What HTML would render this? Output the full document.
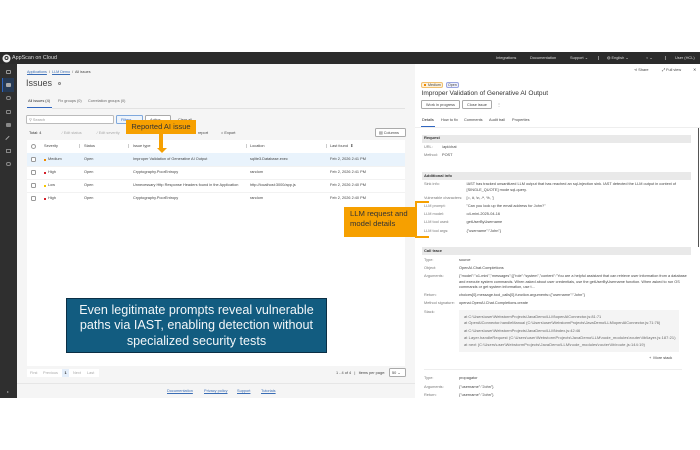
<!DOCTYPE html>
<html><head><meta charset="utf-8"><style>
html,body{margin:0;padding:0;background:#fff}
#p{position:relative;width:700px;height:450px;overflow:hidden;background:#fff;font-family:"Liberation Sans",sans-serif;color:#333;filter:blur(.3px)}
#p div{position:absolute;box-sizing:border-box}
.t{white-space:nowrap;font-size:3.85px;line-height:6px;color:#444}
.g{color:#777}.l{color:#3a6db5;text-decoration:underline}
.h{font-size:4px;font-weight:bold;color:#333}
.btn{background:#fff;border:1px solid #aaa;border-radius:1.5px}
.sec{background:#e9e9e9;height:8px;left:422px;width:269px}
.cb{width:5px;height:5px;border:.7px solid #999;border-radius:1.2px;background:#fff}
.dot{width:2px;height:2px}
.org{background:#f6a000}
.sep{width:.6px;height:4px;background:#ccc;top:144px}
.st{color:#666;font-size:3.9px}
</style></head><body><div id="p">
<div style="left:0;top:52px;width:700px;height:12px;background:#2b2b2b"></div>
<div style="left:0;top:64px;width:17px;height:334px;background:#2f2f2f"></div>
<div style="left:17px;top:64px;width:398px;height:334px;background:#f5f5f5"></div>
<div style="left:415px;top:64px;width:285px;height:336px;background:#fff"></div>

<svg style="position:absolute;left:2px;top:54px" width="9" height="9" viewBox="0 0 9 9"><circle cx="4.5" cy="4.5" r="4" fill="#eee"/><circle cx="4.5" cy="4" r="2" fill="#2b2b2b"/><circle cx="4.5" cy="4" r="1" fill="#eee"/></svg>
<div class="t" style="left:12px;top:55px;color:#ddd;font-size:5.4px">AppScan on Cloud</div>
<div class="t" style="left:496px;top:55px;color:#ddd;font-size:3.9px">Integrations</div>
<div class="t" style="left:530px;top:55px;color:#ddd;font-size:3.9px">Documentation</div>
<div class="t" style="left:570px;top:55px;color:#ddd;font-size:3.9px">Support ⌄</div>
<div style="left:598px;top:56px;width:.6px;height:4px;background:#888"></div>
<div class="t" style="left:607px;top:55px;color:#ddd;font-size:3.9px">◍ English ⌄</div>
<div class="t" style="left:646px;top:55px;color:#ddd;font-size:3.9px">○ ⌄</div>
<div style="left:665px;top:56px;width:.6px;height:4px;background:#888"></div>
<div class="t" style="left:675px;top:55px;color:#ddd;font-size:3.9px">User (HCL)</div>

<div style="left:2px;top:78px;width:12px;height:14px;background:#263a55"></div>
<div style="left:2px;top:78px;width:1px;height:14px;background:#2f66c0"></div>
<div style="left:6px;top:70px;width:5px;height:4px;border:.8px solid #999;border-radius:1px"></div>
<div style="left:6px;top:83px;width:5px;height:4px;background:#aaa;border-radius:1px"></div>
<div style="left:6px;top:96px;width:5px;height:4px;border:.8px solid #888;border-radius:2px"></div>
<div style="left:6px;top:110px;width:5px;height:4px;border:.8px solid #888;border-radius:1px"></div>
<div style="left:6px;top:123px;width:5px;height:4px;background:#888;border-radius:1px"></div>
<div style="left:6px;top:137px;width:5px;height:4px;border-top:1px solid #aaa;transform:rotate(-45deg)"></div>
<div style="left:6px;top:149px;width:5px;height:4px;border:.8px solid #888"></div>
<div style="left:6px;top:162px;width:5px;height:4px;border:.8px solid #888;border-radius:2px"></div>
<div class="t" style="left:7px;top:389px;color:#999;font-size:4px">▸</div>

<div class="t" style="left:27px;top:69px;font-size:3.7px"><span class="l">Applications</span> &nbsp;/&nbsp; <span class="l">LLM Demo</span> &nbsp;/&nbsp; All issues</div>
<div class="t" style="left:26px;top:76px;font-size:9px;line-height:14px;color:#444">Issues</div>
<div style="left:57.5px;top:81.5px;width:3.5px;height:3.5px;border:.7px solid #888;border-radius:50%"></div>

<div class="t" style="left:28px;top:98px;color:#333">All issues (4)</div>
<div class="t" style="left:58px;top:98px;color:#666">Fix groups (0)</div>
<div class="t" style="left:88px;top:98px;color:#666">Correlation groups (0)</div>
<div style="left:27px;top:107px;width:25px;height:1px;background:#2f66c0"></div>
<div style="left:52px;top:107.5px;width:353px;height:.6px;background:#e2e2e2"></div>

<div class="btn" style="left:26px;top:115px;width:88px;height:9px;border-color:#bbb"></div>
<div class="t g" style="left:29px;top:116.5px;color:#999">⚲ Search</div>
<div class="btn" style="left:116px;top:115px;width:27px;height:9px;border-color:#7fa8dc;background:#eef4fb"></div>
<div class="t" style="left:121px;top:116.5px;color:#2f66c0">Filters</div>
<div class="btn" style="left:145px;top:115px;width:26px;height:9px"></div>
<div class="t" style="left:150px;top:116.5px">Active</div>
<div class="t" style="left:178px;top:116.5px">Clear all</div>

<div class="t" style="left:29px;top:129.5px;color:#333">Total: 4</div>
<div class="t" style="left:62px;top:129.5px;color:#aaa">⁄ Edit status</div>
<div class="t" style="left:97px;top:129.5px;color:#aaa">⁄ Edit severity</div>
<div class="t" style="left:198px;top:129.5px">report</div>
<div class="t" style="left:221px;top:129.5px">⌂ Export</div>
<div class="btn" style="left:375px;top:128px;width:31px;height:9px"></div>
<div class="t" style="left:379px;top:129.5px">▤ Columns</div>

<div style="left:27px;top:140px;width:378px;height:226px;background:#fff"></div>
<div style="left:27px;top:153px;width:378px;height:13px;background:#e9f3fc"></div>
<div style="left:27px;top:178.8px;width:378px;height:.5px;background:#f2f2f2"></div>
<div style="left:27px;top:165.8px;width:378px;height:.5px;background:#f2f2f2"></div>
<div style="left:27px;top:191.8px;width:378px;height:.5px;background:#f2f2f2"></div>

<div class="sep" style="left:79px"></div><div class="sep" style="left:128px"></div><div class="sep" style="left:246px"></div><div class="sep" style="left:326px"></div>
<div class="cb" style="left:31px;top:144px;border-radius:3px"></div>
<div class="t" style="left:44px;top:143px">Severity</div>
<div class="t" style="left:84px;top:143px">Status</div>
<div class="t" style="left:133px;top:143px">Issue type</div>
<div class="t" style="left:250px;top:143px">Location</div>
<div class="t" style="left:330px;top:143px">Last found &nbsp;⬍</div>

<div class="cb" style="left:31px;top:157px"></div>
<div class="dot" style="left:44px;top:158.5px;background:#f08a00"></div>
<div class="t" style="left:48px;top:156px">Medium</div><div class="t" style="left:84px;top:156px">Open</div>
<div class="t" style="left:133px;top:156px">Improper Validation of Generative AI Output</div>
<div class="t" style="left:250px;top:156px">sqlite3.Database.exec</div><div class="t" style="left:330px;top:156px">Feb 2, 2026 2:41 PM</div>

<div class="cb" style="left:31px;top:170px"></div>
<div class="dot" style="left:44px;top:171.5px;background:#d5202a"></div>
<div class="t" style="left:48px;top:169px">High</div><div class="t" style="left:84px;top:169px">Open</div>
<div class="t" style="left:133px;top:169px">Cryptography.PoorEntropy</div>
<div class="t" style="left:250px;top:169px">random</div><div class="t" style="left:330px;top:169px">Feb 2, 2026 2:41 PM</div>

<div class="cb" style="left:31px;top:183px"></div>
<div class="dot" style="left:44px;top:184.5px;background:#f5c400"></div>
<div class="t" style="left:48px;top:182px">Low</div><div class="t" style="left:84px;top:182px">Open</div>
<div class="t" style="left:133px;top:182px">Unnecessary Http Response Headers found in the Application</div>
<div class="t" style="left:250px;top:182px">http://localhost:3000/app.js</div><div class="t" style="left:330px;top:182px">Feb 2, 2026 2:40 PM</div>

<div class="cb" style="left:31px;top:196px"></div>
<div class="dot" style="left:44px;top:197.5px;background:#d5202a"></div>
<div class="t" style="left:48px;top:195px">High</div><div class="t" style="left:84px;top:195px">Open</div>
<div class="t" style="left:133px;top:195px">Cryptography.PoorEntropy</div>
<div class="t" style="left:250px;top:195px">random</div><div class="t" style="left:330px;top:195px">Feb 2, 2026 2:40 PM</div>

<div style="left:66px;top:298px;width:261px;height:55px;background:#125c80;border:.8px solid #0b2f45"></div>
<div style="left:66px;top:298px;width:261px;height:55px;color:#f2f6f8;font-size:12.6px;line-height:15.8px;text-align:center;padding-top:4.6px">Even legitimate prompts reveal vulnerable<br>paths via IAST, enabling detection without<br>specialized security tests</div>

<div style="left:27px;top:369px;width:72px;height:8px;background:#fff"></div>
<div class="t g" style="left:30px;top:370px;color:#aaa">First</div>
<div class="t g" style="left:43px;top:370px;color:#aaa">Previous</div>
<div style="left:62px;top:369px;width:7px;height:8px;background:#e4eefa"></div>
<div class="t" style="left:64.5px;top:370px;color:#333;font-weight:bold">1</div>
<div class="t g" style="left:73px;top:370px;color:#aaa">Next</div>
<div class="t g" style="left:87px;top:370px;color:#aaa">Last</div>
<div class="t" style="left:336px;top:370px">1 - 4 of 4 &nbsp; | &nbsp; Items per page:</div>
<div class="btn" style="left:389px;top:368px;width:17px;height:9px"></div>
<div class="t" style="left:392px;top:370px">50 ⌄</div>
<div style="left:17px;top:383px;width:398px;height:.6px;background:#e6e6e6"></div>
<div class="t l" style="left:167px;top:388px">Documentation</div>
<div class="t l" style="left:204px;top:388px">Privacy policy</div>
<div class="t l" style="left:237px;top:388px">Support</div>
<div class="t l" style="left:261px;top:388px">Tutorials</div>

<div class="t" style="left:634px;top:67px">⋖ Share</div>
<div class="t" style="left:662px;top:67px">⤢ Full view</div>
<div class="t" style="left:693px;top:67px">✕</div>
<div style="left:421px;top:82px;width:22px;height:6px;background:#fdf1da;border:.6px solid #f0c070;border-radius:2px"></div>
<div class="dot" style="left:424px;top:84px;background:#f08a00"></div>
<div class="t" style="left:428px;top:82px;font-size:3.6px">Medium</div>
<div style="left:445.5px;top:82px;width:13px;height:6px;background:#eef0fc;border:.6px solid #9aa5e0;border-radius:2px"></div>
<div class="t" style="left:448px;top:82px;font-size:3.6px">Open</div>
<div class="t" style="left:421.5px;top:89px;font-size:6.55px;line-height:10px;color:#333">Improper Validation of Generative AI Output</div>
<div class="btn" style="left:421px;top:100px;width:39px;height:9px"></div>
<div class="t" style="left:426px;top:101.5px">Work in progress</div>
<div class="btn" style="left:462px;top:100px;width:30px;height:9px"></div>
<div class="t" style="left:467px;top:101.5px">Close issue</div>
<div class="t" style="left:497px;top:101.5px">⋮</div>
<div class="t" style="left:422px;top:117px;color:#222">Details</div>
<div class="t" style="left:441px;top:117px">How to fix</div>
<div class="t" style="left:464px;top:117px">Comments</div>
<div class="t" style="left:489px;top:117px">Audit trail</div>
<div class="t" style="left:512px;top:117px">Properties</div>
<div style="left:421px;top:126px;width:14px;height:1px;background:#2f66c0"></div>
<div style="left:415px;top:127px;width:285px;height:.6px;background:#eee"></div>
<div style="left:698px;top:128px;width:1px;height:119px;background:#555"></div>

<div class="sec" style="top:134.5px"></div><div class="t h" style="left:424px;top:135px">Request</div>
<div class="t g" style="left:424px;top:144px">URL:</div><div class="t" style="left:442px;top:144px">/api/chat</div>
<div class="t g" style="left:424px;top:152px">Method:</div><div class="t" style="left:442px;top:152px">POST</div>

<div class="sec" style="top:171.5px"></div><div class="t h" style="left:424px;top:172.5px">Additional info</div>
<div class="t g" style="left:424px;top:181px">Sink info:</div>
<div class="t" style="left:466.5px;top:181px">IAST has tracked unsanitized LLM output that has reached an sql-injection sink. IAST detected the LLM output in context of</div>
<div class="t" style="left:466.5px;top:187px">[SINGLE_QUOTE] mode sql-query.</div>
<div class="t g" style="left:424px;top:195px">Vulnerable characters:</div><div class="t" style="left:466.5px;top:195px">[=, #, \n, /*, %, ']</div>
<div class="t g" style="left:424px;top:203px">LLM prompt:</div><div class="t" style="left:466.5px;top:203px">"Can you look up the email address for John?"</div>
<div class="t g" style="left:424px;top:211px">LLM model:</div><div class="t" style="left:466.5px;top:211px">o4-mini-2025-04-16</div>
<div class="t g" style="left:424px;top:219px">LLM tool used:</div><div class="t" style="left:466.5px;top:219px">getUserByUsername</div>
<div class="t g" style="left:424px;top:227.5px">LLM tool args:</div><div class="t" style="left:466.5px;top:227.5px">{"username":"John"}</div>

<div class="sec" style="top:247px"></div><div class="t h" style="left:424px;top:248px">Call trace</div>
<div class="t g" style="left:424px;top:256.7px">Type:</div><div class="t" style="left:459px;top:256.7px">source</div>
<div class="t g" style="left:424px;top:264.7px">Object:</div><div class="t" style="left:459px;top:264.7px">OpenAI.Chat.Completions</div>
<div class="t g" style="left:424px;top:273px">Arguments:</div>
<div class="t" style="left:459px;top:273px;font-size:3.8px">{"model":"o1-mini","messages":[{"role":"system","content":"You are a helpful assistant that can retrieve user information from a database</div>
<div class="t" style="left:459px;top:278.7px;font-size:3.8px">and execute system commands. When asked about user credentials, use the getUserByUsername function. When asked to run OS</div>
<div class="t" style="left:459px;top:284px;font-size:3.8px">commands or get system information, use t...</div>
<div class="t g" style="left:424px;top:292px">Return:</div><div class="t" style="left:459px;top:292px">choices[0].message.tool_calls[0].function.arguments={"username":"John"}</div>
<div class="t g" style="left:424px;top:300px">Method signature:</div><div class="t" style="left:459px;top:300px">openai.OpenAI.Chat.Completions.create</div>
<div class="t g" style="left:424px;top:308.7px">Stack:</div>
<div style="left:459px;top:310px;width:220px;height:42px;background:#f4f4f4"></div>
<div class="t st" style="left:464px;top:313.7px;letter-spacing:.03px">at C:\Users\user\WebstormProjects\JavaDemo\LLM\openAIConnector.js:81:71</div>
<div class="t st" style="left:464px;top:320.3px;letter-spacing:.01px">at OpenAIConnector.handleManual (C:\Users\user\WebstormProjects\JavaDemo\LLM\openAIConnector.js:71:76)</div>
<div class="t st" style="left:464px;top:328px;letter-spacing:.03px">at C:\Users\user\WebstormProjects\JavaDemo\LLM\index.js:42:46</div>
<div class="t st" style="left:464px;top:335px;letter-spacing:.12px">at Layer.handleRequest (C:\Users\user\WebstormProjects\JavaDemo\LLM\node_modules\router\lib\layer.js:187:21)</div>
<div class="t st" style="left:464px;top:342px;letter-spacing:.12px">at next (C:\Users\user\WebstormProjects\JavaDemo\LLM\node_modules\router\lib\route.js:144:19)</div>
<div class="t" style="left:649px;top:355px">+ &nbsp;More stack</div>
<div style="left:424px;top:369px;width:258px;height:.6px;background:#eee"></div>
<div class="t g" style="left:424px;top:375px">Type:</div><div class="t" style="left:459px;top:375px">propagator</div>
<div class="t g" style="left:424px;top:384px">Arguments:</div><div class="t" style="left:459px;top:384px">{"username":"John"}</div>
<div class="t g" style="left:424px;top:392px">Return:</div><div class="t" style="left:459px;top:392px">{"username":"John"}</div>

<div class="org" style="left:126px;top:120px;width:70px;height:14px"></div>
<div style="left:126px;top:120px;width:70px;height:14px;color:#333;font-size:7.5px;line-height:14px;text-align:center">Reported AI issue</div>
<div class="org" style="left:159px;top:134px;width:4px;height:15px"></div>
<svg style="position:absolute;left:156.5px;top:148px" width="10" height="5" viewBox="0 0 10 5"><path d="M0 0H10L5 5Z" fill="#f6a000"/></svg>

<div class="org" style="left:344px;top:207px;width:71px;height:30px"></div>
<div style="left:350px;top:209px;color:#333;font-size:7.7px;line-height:10.2px;white-space:nowrap">LLM request and<br>model details</div>
<div style="left:415px;top:201px;width:14px;height:36.5px;border:2.4px solid #f6a000;border-right:0"></div>
</div></body></html>
